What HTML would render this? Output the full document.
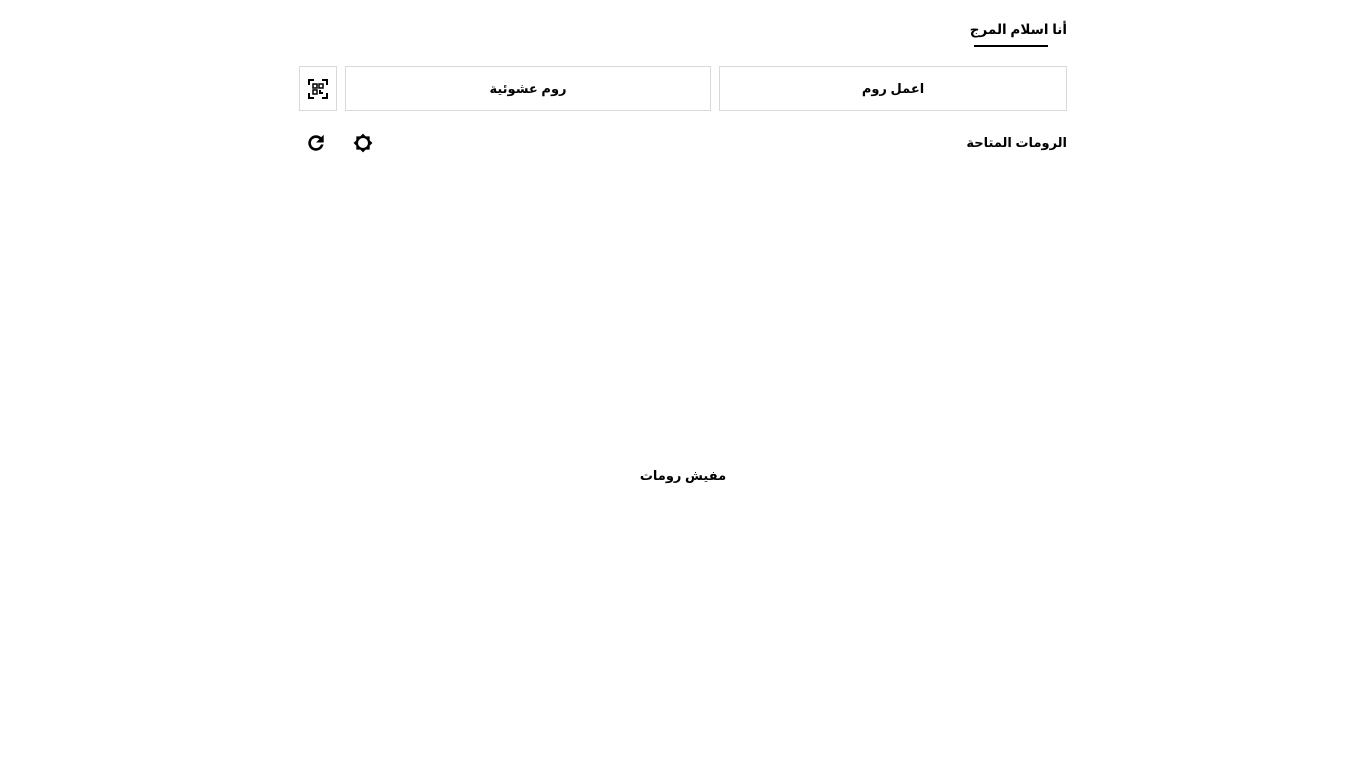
<!DOCTYPE html>
<html dir="rtl"><head><meta charset="utf-8"><style>
body{margin:0;background:#fff;font-family:"Liberation Sans","DejaVu Sans",sans-serif;color:#000;font-weight:bold;font-size:13px}
.abs{position:absolute}
.btn{position:absolute;border:1px solid #d9d9d9;box-sizing:border-box;display:flex;align-items:center;justify-content:center;background:#fff}
</style></head><body>
<div class="abs" style="left:960px;top:19px;width:107px;text-align:right;font-size:13.5px;line-height:22px;white-space:nowrap;direction:rtl">أنا اسلام المرج</div>
<div class="abs" style="left:974px;top:45px;width:74px;height:2px;background:#000"></div>
<div class="btn" style="left:719px;top:66px;width:348px;height:45px">اعمل روم</div>
<div class="btn" style="left:345px;top:66px;width:366px;height:45px">روم عشوئية</div>
<div class="btn" style="left:299px;top:66px;width:38px;height:45px">
<svg width="20" height="20" viewBox="0 0 20 20" fill="none" stroke="#000" stroke-width="2"><path d="M1 6V1h5M14 1h5v5M19 14v5h-5M6 19H1v-5"/><rect x="5" y="5" width="4" height="4" stroke-width="1.5"/><rect x="11" y="5" width="4" height="4" stroke-width="1.5"/><rect x="5" y="11" width="4" height="4" stroke-width="1.5"/><path d="M11 11h2v2h2v2h-4z" fill="#000" stroke="none"/></svg></div>
<div class="abs" style="left:900px;top:132px;width:167px;text-align:right;line-height:22px;direction:rtl">الرومات المتاحة</div>
<svg class="abs" style="left:305px;top:132px" width="22" height="22" viewBox="0 0 24 24"><path d="M17.65 6.35A7.96 7.96 0 0 0 12 4a8 8 0 1 0 7.73 10h-2.08A6 6 0 1 1 12 6c1.66 0 3.14.69 4.22 1.78L13 11h7V4z" fill="#000" stroke="#000" stroke-width="0.8"/></svg>
<svg class="abs" style="left:353px;top:133px" width="20" height="20" viewBox="0 0 24 24"><path d="M20 8.69V4h-4.69L12 .69 8.69 4H4v4.69L.69 12 4 15.31V20h4.69L12 23.31 15.31 20H20v-4.69L23.31 12zM12 18a6 6 0 1 1 0-12 6 6 0 0 1 0 12z" fill="#000"/><circle cx="12" cy="12" r="5" fill="#fff"/></svg>
<div class="abs" style="left:583px;top:465px;width:200px;text-align:center;line-height:22px;direction:rtl">مفيش رومات</div>
</body></html>
